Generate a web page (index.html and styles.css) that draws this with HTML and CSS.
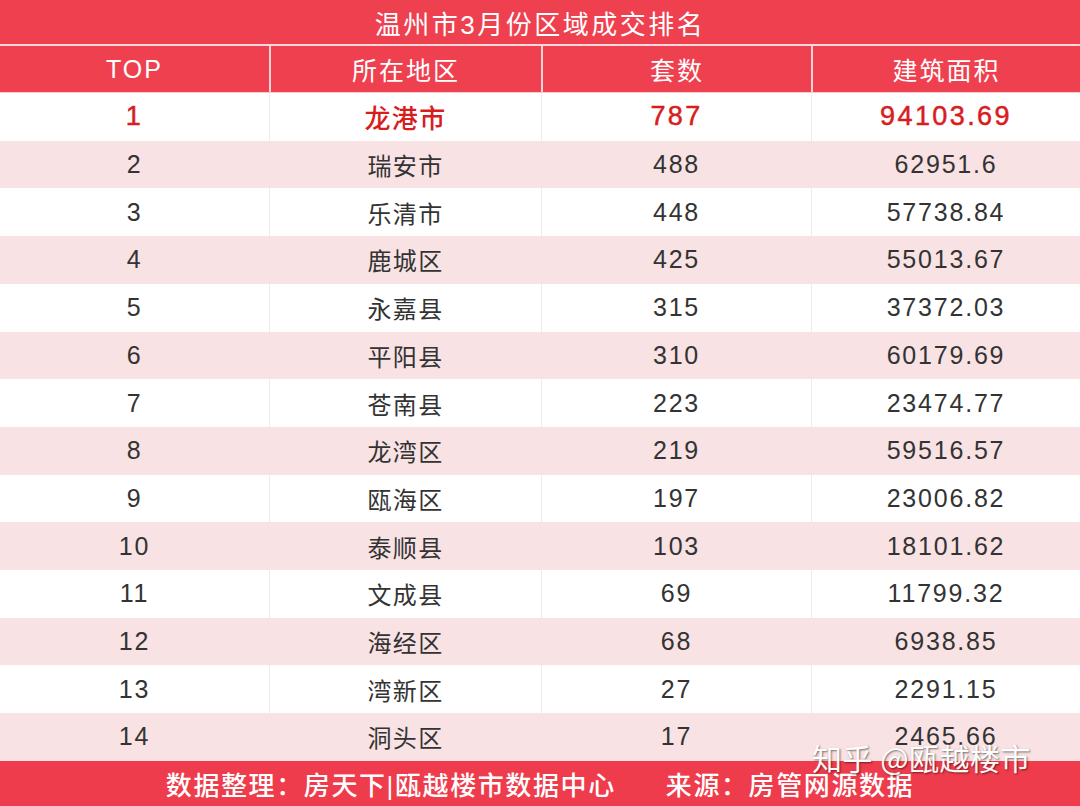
FILE: index.html
```html
<!DOCTYPE html>
<html lang="zh">
<head>
<meta charset="utf-8">
<title>温州市3月份区域成交排名</title>
<link rel="stylesheet" href="styles.css">
</head>
<body>
<div class="page">
  <div class="title">温州市3月份区域成交排名</div>
  <div class="head">
    <div class="cell">TOP</div>
    <div class="cell">所在地区</div>
    <div class="cell">套数</div>
    <div class="cell">建筑面积</div>
  </div>
  <div class="rows">
    <div class="row first"><div class="cell num">1</div><div class="cell">龙港市</div><div class="cell num">787</div><div class="cell num">94103.69</div></div>
    <div class="row alt"><div class="cell num">2</div><div class="cell">瑞安市</div><div class="cell num">488</div><div class="cell num">62951.6</div></div>
    <div class="row"><div class="cell num">3</div><div class="cell">乐清市</div><div class="cell num">448</div><div class="cell num">57738.84</div></div>
    <div class="row alt"><div class="cell num">4</div><div class="cell">鹿城区</div><div class="cell num">425</div><div class="cell num">55013.67</div></div>
    <div class="row"><div class="cell num">5</div><div class="cell">永嘉县</div><div class="cell num">315</div><div class="cell num">37372.03</div></div>
    <div class="row alt"><div class="cell num">6</div><div class="cell">平阳县</div><div class="cell num">310</div><div class="cell num">60179.69</div></div>
    <div class="row"><div class="cell num">7</div><div class="cell">苍南县</div><div class="cell num">223</div><div class="cell num">23474.77</div></div>
    <div class="row alt"><div class="cell num">8</div><div class="cell">龙湾区</div><div class="cell num">219</div><div class="cell num">59516.57</div></div>
    <div class="row"><div class="cell num">9</div><div class="cell">瓯海区</div><div class="cell num">197</div><div class="cell num">23006.82</div></div>
    <div class="row alt"><div class="cell num">10</div><div class="cell">泰顺县</div><div class="cell num">103</div><div class="cell num">18101.62</div></div>
    <div class="row"><div class="cell num">11</div><div class="cell">文成县</div><div class="cell num">69</div><div class="cell num">11799.32</div></div>
    <div class="row alt"><div class="cell num">12</div><div class="cell">海经区</div><div class="cell num">68</div><div class="cell num">6938.85</div></div>
    <div class="row"><div class="cell num">13</div><div class="cell">湾新区</div><div class="cell num">27</div><div class="cell num">2291.15</div></div>
    <div class="row alt"><div class="cell num">14</div><div class="cell">洞头区</div><div class="cell num">17</div><div class="cell num">2465.66</div></div>
  </div>
  <div class="foot">
    <span>数据整理：房天下|瓯越楼市数据中心</span>
    <span>来源：房管网源数据</span>
  </div>
  <div class="watermark">知乎 @瓯越楼市</div>
</div>
</body>
</html>
```

FILE: styles.css
```css
html, body {
  margin: 0;
  padding: 0;
  background: #ffffff;
}
.page {
  position: relative;
  width: 1080px;
  height: 806px;
  overflow: hidden;
  display: flex;
  flex-direction: column;
  font-family: "Liberation Sans", "Noto Sans CJK SC", sans-serif;
  color: #333333;
}
.title {
  height: 44px;
  background: #ef4050;
  color: #ffffff;
  font-size: 26px;
  letter-spacing: 2.5px;
  display: flex;
  align-items: center;
  justify-content: center;
  border-bottom: 2px solid #fbd7db;
}
.head {
  height: 46px;
  background: #ef4050;
  color: #ffffff;
  font-size: 25px;
  letter-spacing: 2px;
  display: grid;
  grid-template-columns: 269px 272px 270px 269px;
  border-bottom: 1px solid #f7c9ce;
}
.head .cell + .cell {
  border-left: 2px solid #fad3d7;
}
.cell {
  display: flex;
  align-items: center;
  justify-content: center;
}
.rows {
  display: flex;
  flex-direction: column;
}
.row {
  height: 47.71px;
  display: grid;
  grid-template-columns: 269px 272px 270px 269px;
  font-size: 24px;
  letter-spacing: 1.3px;
  background: #ffffff;
}
.row .cell + .cell {
  border-left: 1px solid #ececec;
}
.row.alt {
  background: #f8e2e4;
}
.row.alt .cell + .cell {
  border-left-color: #f8e2e4;
}
.row .num {
  font-size: 25px;
  letter-spacing: 1.8px;
}
.row.first {
  color: #d81d1f;
  font-size: 26px;
  font-weight: 500;
}
.row.first .num {
  font-size: 27px;
  letter-spacing: 2.4px;
  font-weight: normal;
  -webkit-text-stroke: 0.5px #d81d1f;
}
.foot {
  flex: 1;
  background: #ef3c4c;
  color: #ffffff;
  font-size: 26px;
  font-weight: 500;
  letter-spacing: 1.6px;
  display: flex;
  align-items: center;
  justify-content: center;
  gap: 50px;
}
.watermark {
  position: absolute;
  left: 812px;
  top: 735px;
  color: #ffffff;
  font-family: "Noto Sans CJK SC", sans-serif;
  font-size: 30px;
  letter-spacing: 0.5px;
  text-shadow: 1px 1px 2px rgba(0, 0, 0, 0.55);
  opacity: 0.95;
}
```
